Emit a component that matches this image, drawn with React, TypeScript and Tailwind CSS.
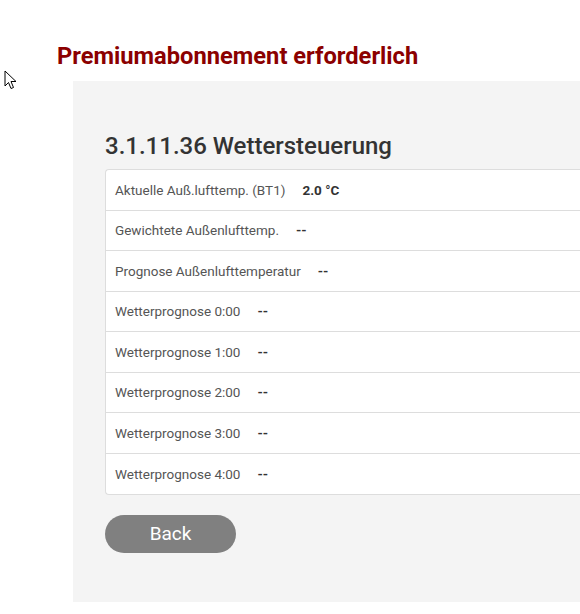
import React from "react";

const rows: [string, string][] = [
  ["Aktuelle Auß.lufttemp. (BT1)", "2.0 °C"],
  ["Gewichtete Außenlufttemp.", "--"],
  ["Prognose Außenlufttemperatur", "--"],
  ["Wetterprognose 0:00", "--"],
  ["Wetterprognose 1:00", "--"],
  ["Wetterprognose 2:00", "--"],
  ["Wetterprognose 3:00", "--"],
  ["Wetterprognose 4:00", "--"],
];

export default function App() {
  return (
    <div className="relative w-[580px] h-[614px] bg-white overflow-hidden" style={{ fontFamily: "Roboto, 'Liberation Sans', sans-serif" }}>
      <svg className="absolute left-[4px] top-[70px]" width="14" height="20" viewBox="0 0 14 20">
        <path d="M1 1 L1 16 L4.5 12.5 L7 18.5 L9.5 17.5 L7 11.5 L12 11.5 Z" fill="#fff" stroke="#000" strokeWidth="1" strokeLinejoin="miter" />
      </svg>
      <div className="pt-[41px] pl-[57px]">
        <h1 className="text-[23.7px] leading-[30px] font-bold text-[#8b0000]">Premiumabonnement erforderlich</h1>
      </div>
      <div className="ml-[73px] mt-[10px] h-[521px] bg-[#f4f4f4] pl-[32px] pt-[50px]">
        <h2 className="text-[24px] leading-[30px] font-medium text-[#333]">3.1.11.36 Wettersteuerung</h2>
        <div className="mt-[8px] bg-white border border-r-0 border-[#ddd] rounded-l-[4px]">
          {rows.map(([label, value], i) => (
            <div
              key={i}
              className={`flex items-center h-[40.5px] pl-[9px] ${i < rows.length - 1 ? "border-b border-[#ddd]" : ""}`}
            >
              <span className="text-[13.5px] text-[#555]">{label}</span>
              <span className="ml-[17px] font-bold text-[#333] text-[13.5px]">{value}</span>
            </div>
          ))}
        </div>
        <button className="mt-[20px] w-[131px] h-[38px] rounded-full bg-[#808080] text-white text-[19px]">Back</button>
      </div>
    </div>
  );
}
